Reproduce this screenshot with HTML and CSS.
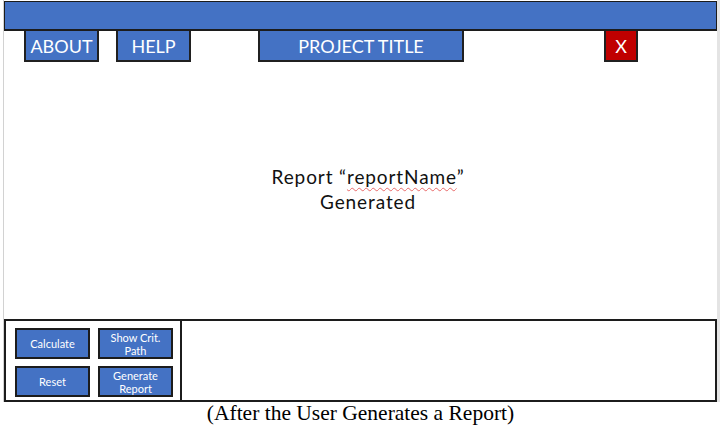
FILE: index.html
```html
<!DOCTYPE html>
<html>
<head>
<meta charset="utf-8">
<link rel="stylesheet" href="styles.css">
</head>
<body>
<div class="screen">
  <div class="topbar"></div>
  <div class="nav">
    <div class="tab about">ABOUT</div>
    <div class="tab help">HELP</div>
    <div class="tab title">PROJECT TITLE</div>
    <div class="tab close">X</div>
  </div>
  <div class="main">
    <div class="msg">Report “<span class="spell">reportName</span>”</div>
    <div class="msg">Generated</div>
  </div>
  <div class="panel">
    <div class="controls">
      <div class="btn">Calculate</div>
      <div class="btn">Show Crit.<br>Path</div>
      <div class="btn">Reset</div>
      <div class="btn">Generate<br>Report</div>
    </div>
    <div class="output"></div>
  </div>
</div>
<div class="caption">(After the User Generates a Report)</div>
</body>
</html>
```
FILE: styles.css
```css
html, body {
  margin: 0;
  padding: 0;
  background: #ffffff;
}
body {
  width: 721px;
  height: 430px;
  overflow: hidden;
  font-family: Lato, "Open Sans", sans-serif;
}
.screen {
  margin-left: 3px;
  width: 713px;
  border-left: 1px solid #d2d2d2;
  border-right: 3px solid #e4e4e4;
  padding-top: 1px;
}
.topbar {
  height: 27px;
  background: #4472c4;
  border: 1px solid #1c1c1c;
  border-bottom-width: 2px;
}
.nav {
  display: flex;
  height: 31px;
}
.tab {
  box-sizing: border-box;
  height: 31px;
  background: #4472c4;
  color: #ffffff;
  border: 2px solid #202020;
  border-top: none;
  font-size: 18px;
  display: flex;
  align-items: center;
  justify-content: center;
  padding-top: 1px;
}
.about { margin-left: 20px; width: 75px; }
.help { margin-left: 17px; width: 75px; }
.title { margin-left: 67px; width: 206px; }
.close {
  margin-left: 140px;
  width: 34px;
  background: #c00000;
}
.main {
  box-sizing: border-box;
  height: 257px;
  padding-top: 102px;
  padding-left: 15px;
  text-align: center;
  color: #111111;
}
.msg {
  font-size: 19px;
  line-height: 25px;
  letter-spacing: 0.9px;
}
.spell {
  text-decoration: underline wavy #e86a6a;
  text-decoration-thickness: 1px;
  text-underline-offset: 3px;
}
.panel {
  box-sizing: border-box;
  height: 83px;
  border: 2px solid #1c1c1c;
  display: flex;
}
.controls {
  width: 176px;
  box-sizing: border-box;
  border-right: 2px solid #1c1c1c;
  padding: 7px 0 0 9px;
  display: grid;
  grid-template-columns: 75px 75px;
  grid-auto-rows: 31px;
  column-gap: 8px;
  row-gap: 7px;
  align-content: start;
}
.btn {
  box-sizing: border-box;
  background: #4472c4;
  border: 2px solid #1c1c1c;
  color: #ffffff;
  font-size: 11px;
  line-height: 13px;
  text-align: center;
  display: flex;
  align-items: center;
  justify-content: center;
}
.output {
  flex: 1;
}
.caption {
  font-family: "Liberation Serif", "Times New Roman", serif;
  font-size: 21.5px;
  line-height: 22px;
  text-align: center;
  width: 721px;
  color: #000000;
}
```
